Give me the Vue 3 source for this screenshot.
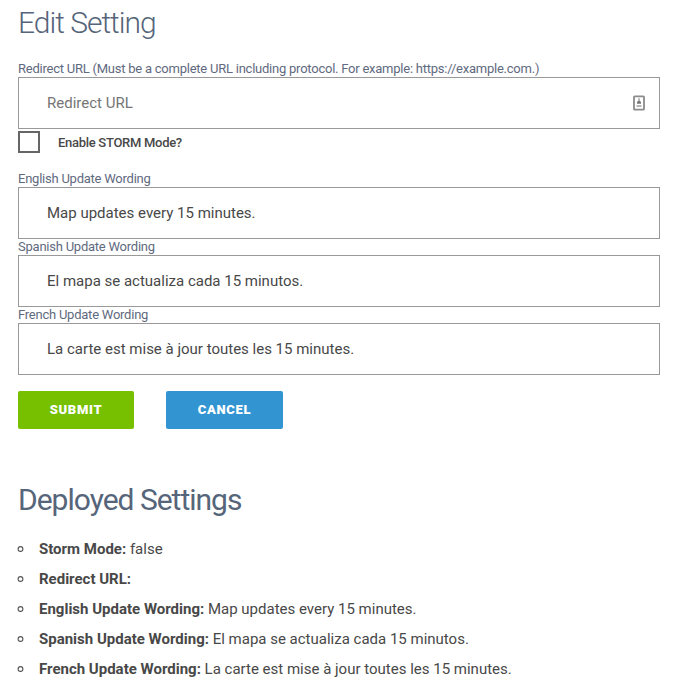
<script setup>
import { ref } from 'vue'
const fields = ref([
  { label: 'English Update Wording', value: 'Map updates every 15 minutes.' },
  { label: 'Spanish Update Wording', value: 'El mapa se actualiza cada 15 minutos.' },
  { label: 'French Update Wording', value: 'La carte est mise à jour toutes les 15 minutes.' },
])
const settings = [
  ['Storm Mode:', 'false'],
  ['Redirect URL:', ''],
  ['English Update Wording:', 'Map updates every 15 minutes.'],
  ['Spanish Update Wording:', 'El mapa se actualiza cada 15 minutos.'],
  ['French Update Wording:', 'La carte est mise à jour toutes les 15 minutes.'],
]
</script>

<template>
  <main class="page">
    <h1 class="title">Edit Setting</h1>
    <form @submit.prevent>
      <label class="label" for="redirect">Redirect URL (Must be a complete URL including protocol. For example: https://example.com.)</label>
      <div class="field">
        <input id="redirect" class="input" placeholder="Redirect URL" />
        <svg class="badge" width="12" height="16" viewBox="0 0 12 16">
          <rect x="1" y="1.3" width="10" height="13.4" rx="0.8" fill="#fff" stroke="#8b8b8b" stroke-width="1.8" />
          <path d="M6 3.2v3" stroke="#999" stroke-width="1.4" />
          <path d="M4 8.8V7l1-1h2l1 1v1.800z" fill="#777" />
          <path d="M3.500 11h5" stroke="#b5b5b5" stroke-width="2" />
        </svg>
      </div>
      <label class="check"><input type="checkbox" class="box" /><span>Enable STORM Mode?</span></label>
      <template v-for="(f, i) in fields" :key="f.label">
        <label class="label" :for="'wording-' + i">{{ f.label }}</label>
        <div class="field"><input :id="'wording-' + i" v-model="f.value" class="input" /></div>
      </template>
      <div class="actions">
        <button class="btn submit">SUBMIT</button>
        <button class="btn cancel" type="button">CANCEL</button>
      </div>
    </form>
    <h2 class="title deployed">Deployed Settings</h2>
    <ul class="list">
      <li v-for="s in settings" :key="s[0]" class="item">
        <svg class="bullet" width="7" height="6" viewBox="0 0 7 6"><circle cx="3.500" cy="3" r="2.400" fill="none" stroke="#555" stroke-width="1.100" /></svg>
        <span><b>{{ s[0] }}</b> {{ s[1] }}</span>
      </li>
    </ul>
  </main>
</template>

<style>
body { background: #fff; }
</style>
<style scoped>
.page { box-sizing: border-box; height: 700px; overflow: hidden; padding: 4px 39px 0 18px; font-family: Roboto, sans-serif; color: #484848; }
.title { margin: 0; font-size: 30px; line-height: 38px; font-weight: 300; letter-spacing: -1px; color: #56657a; }
.label { display: block; height: 16px; line-height: 16px; font-size: 13px; letter-spacing: -0.235px; color: #5f6a80; }
form { padding-top: 19px; }
.field { display: flex; align-items: center; box-sizing: border-box; height: 52px; border: 1px solid #999; padding: 0 14px 0 28px; }
.input { flex: 1; min-width: 0; border: 0; padding: 0; outline: 0; background: none; font: 15px Roboto, sans-serif; color: #484848; }
.input::placeholder { color: #757575; opacity: 1; }
.badge { flex: none; }
.check { display: flex; align-items: center; gap: 18px; height: 22px; margin: 2px 0 18px; font-size: 13px; letter-spacing: -0.29px; font-weight: 500; }
.box { appearance: none; box-sizing: border-box; width: 22px; height: 22px; margin: 0; border: 2px solid #666; background: #fff; }
.actions { display: flex; gap: 32px; margin-top: 16px; }
.btn { box-sizing: border-box; height: 38px; border: 0; border-radius: 2px; padding: 0 0 2px; font: 900 13px Roboto, sans-serif; letter-spacing: 0.7px; color: #fff; }
.submit { width: 116px; background: #76c000; }
.cancel { width: 117px; background: #3295d2; }
.deployed { margin-top: 52px; font-weight: 400; }
.list { margin: 15px 0 0 -1px; padding: 0; list-style: none; font-size: 15px; line-height: 30px; }
.item { display: flex; align-items: center; gap: 15px; }
.bullet { flex: none; }
</style>
